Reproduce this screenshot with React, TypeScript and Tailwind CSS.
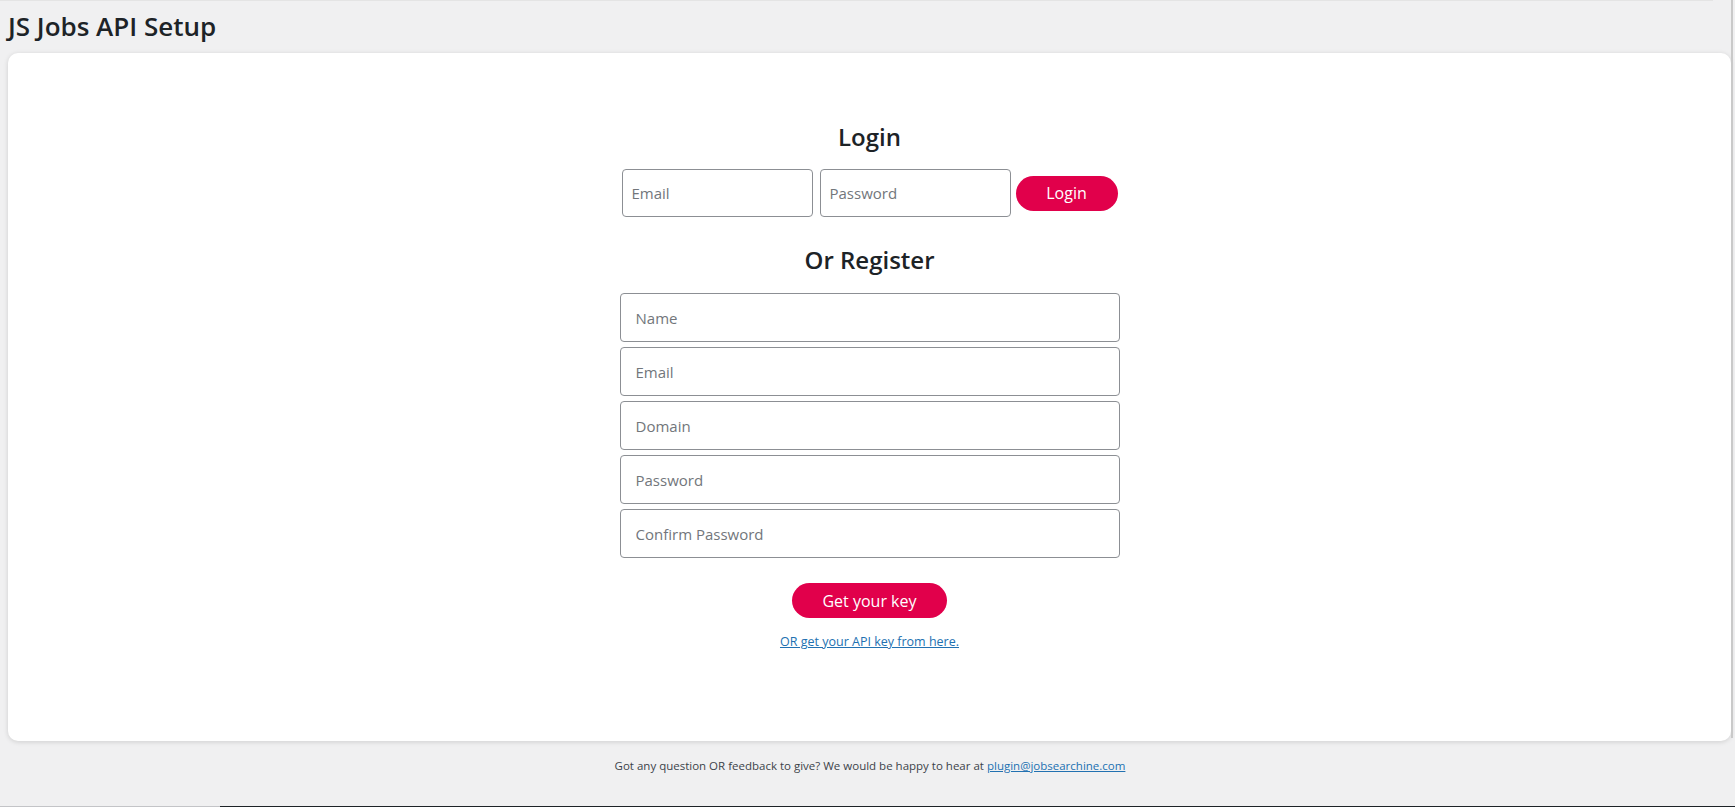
import React from "react";

const font = "font-['Open_Sans','Noto_Sans',sans-serif]";

const Field = ({ placeholder, className = "" }: { placeholder: string; className?: string }) => (
  <input
    type="text"
    placeholder={placeholder}
    className={`block border border-[#8c8f94] rounded-[4px] bg-white text-[15px] text-[#2c3338] placeholder:text-[#72767b] outline-none ${className}`}
  />
);

export default function App() {
  return (
    <div className={`h-[807px] bg-[#f0f0f1] flex flex-col overflow-hidden text-[#1d2327] ${font}`}>
      <div className="flex flex-1 min-h-0">
        <div className="w-[1731px] flex flex-col">
          <div className="h-px bg-[#e4e4e4] mr-[18px]" />
          <h1 className="pl-2 pt-2 text-[26px] leading-[34px] font-semibold">JS Jobs API Setup</h1>

          {/* main card */}
          <div className="ml-2 mt-[10px] h-[688px] bg-white rounded-[10px] shadow-[0_1px_5px_rgba(0,0,0,0.14)] pt-[68px] flex flex-col items-center">
            <h2 className="text-[24px] leading-8 font-semibold">Login</h2>
            <div className="mt-4 flex items-center">
              <Field placeholder="Email" className="w-[191px] h-[48px] px-[9px]" />
              <Field placeholder="Password" className="ml-[7px] w-[191px] h-[48px] px-[9px]" />
              <button className="ml-[5px] w-[102px] h-[35px] rounded-full bg-[#e1004b] text-white text-[16px]">
                Login
              </button>
            </div>

            <h2 className="mt-[27px] text-[24px] leading-8 font-semibold">Or Register</h2>
            <div className="mt-[17px] flex flex-col gap-[5px]">
              {["Name", "Email", "Domain", "Password", "Confirm Password"].map((p) => (
                <Field key={p} placeholder={p} className="w-[500px] h-[49px] px-[15px]" />
              ))}
            </div>

            <button className="mt-[25px] w-[155px] h-[35px] rounded-full bg-[#e1004b] text-white text-[16px]">
              Get your key
            </button>
            <a href="#" className="mt-[15px] text-[12.5px] leading-[18px] text-[#2271b1] underline">
              OR get your API key from here.
            </a>
          </div>

          <p className="mt-4 pl-[9px] text-center text-[11.5px] leading-[18px] text-[#3c434a]">
            Got any question OR feedback to give? We would be happy to hear at{" "}
            <a href="#" className="text-[#2271b1] underline">plugin@jobsearchine.com</a>
          </p>
        </div>
        <div className="w-[2px] h-[738px] bg-[#c9c9c9]" />
      </div>
      <div className="h-px flex shrink-0">
        <div className="w-[220px] bg-[#c3c4c7]" />
        <div className="flex-1 bg-[#1d2327]" />
      </div>
    </div>
  );
}
